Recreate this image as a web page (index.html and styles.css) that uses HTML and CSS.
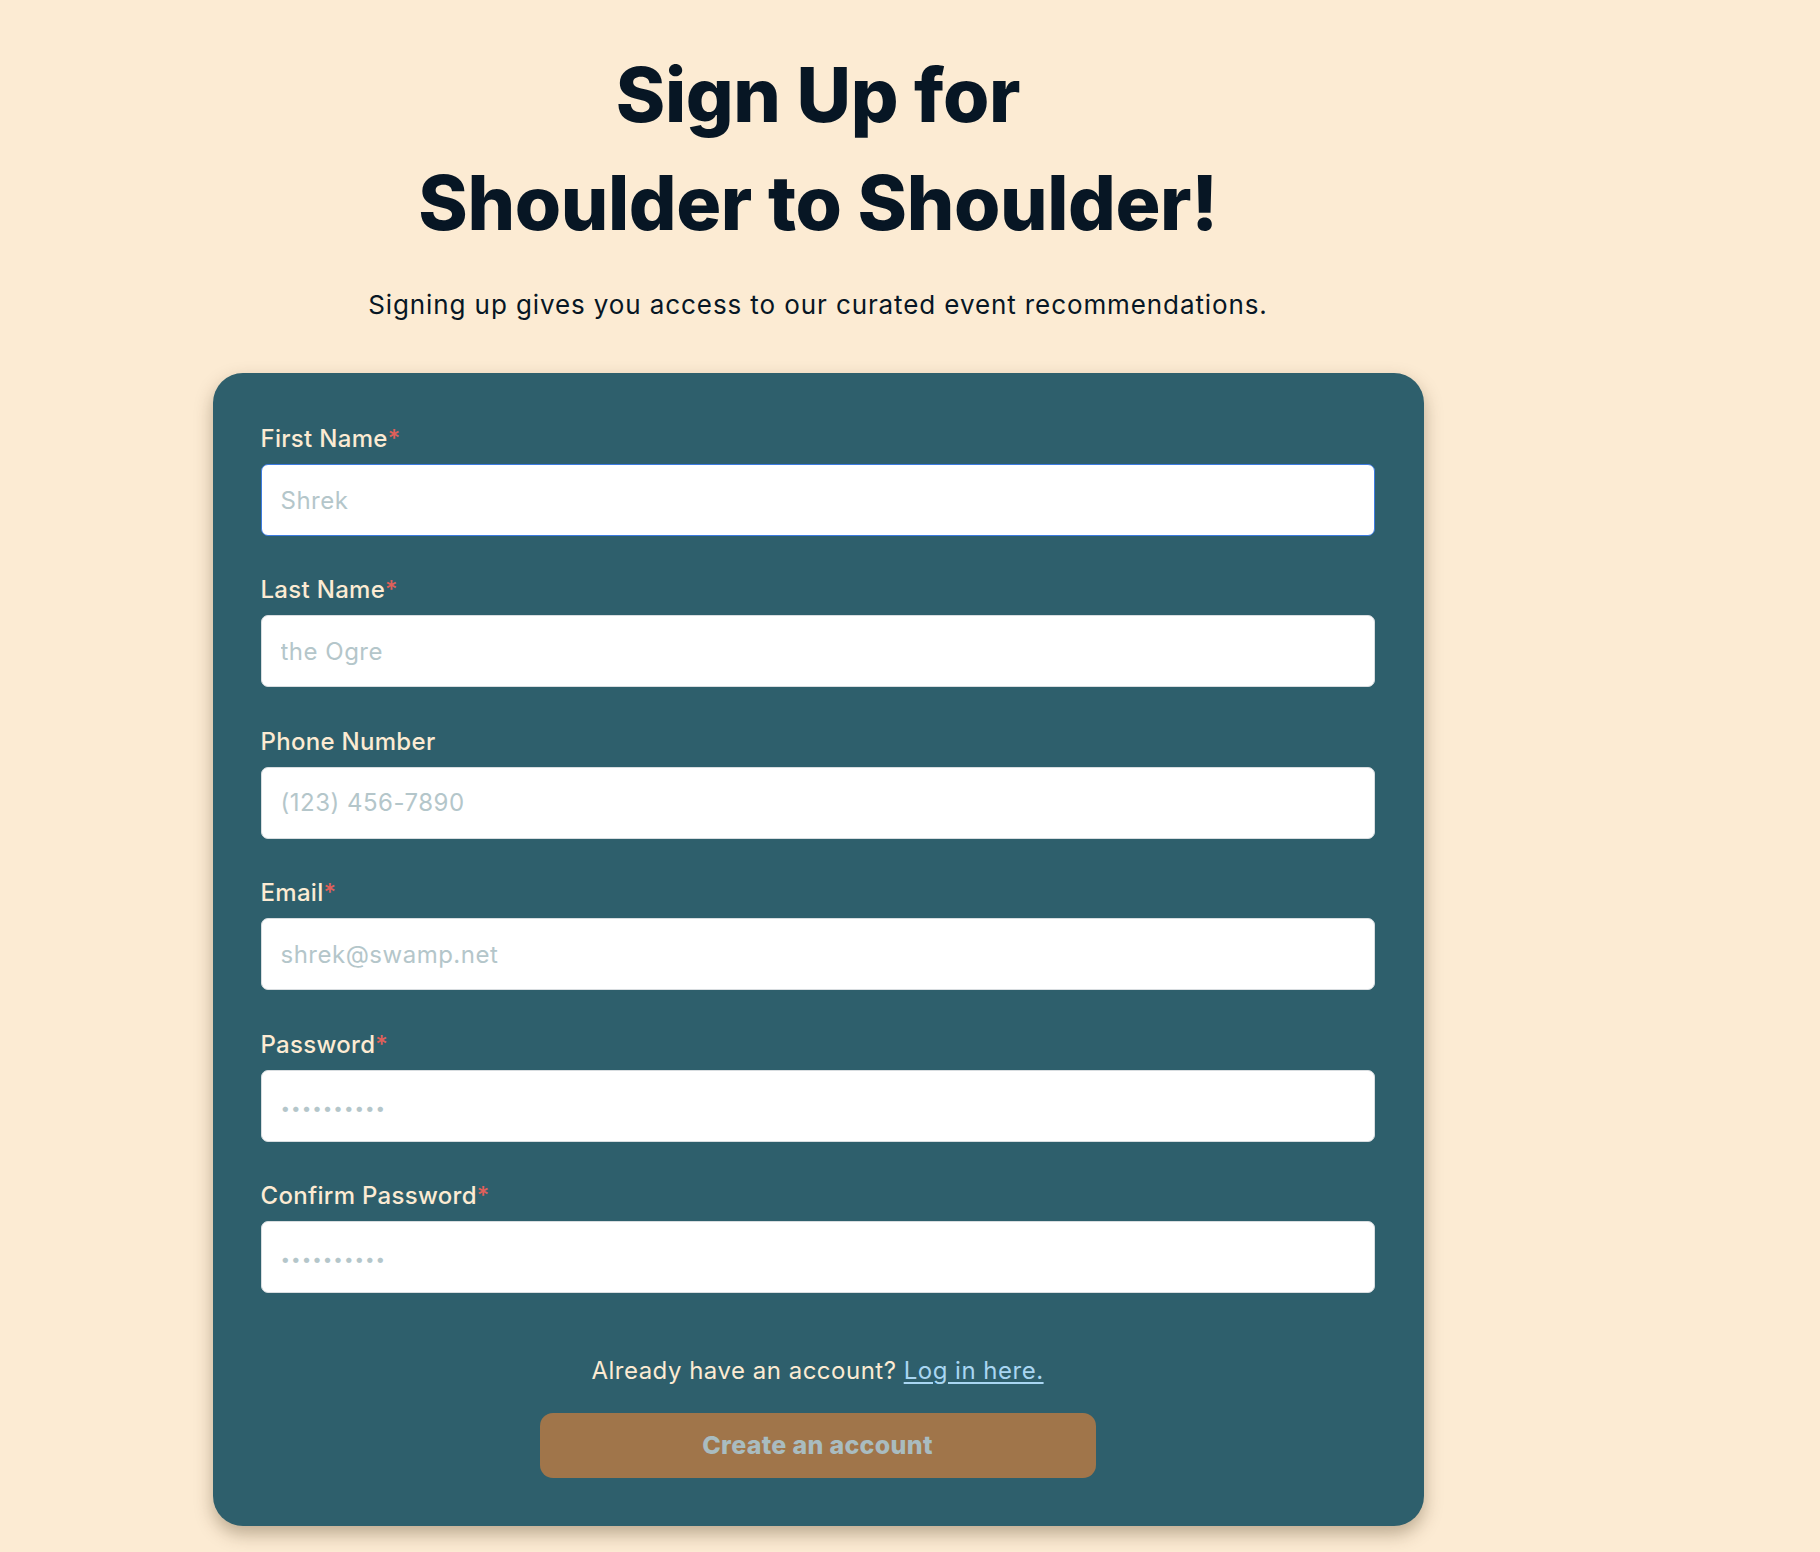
FILE: index.html
```html
<!DOCTYPE html>
<html lang="en">
<head>
<meta charset="utf-8">
<title>Sign Up</title>
<link rel="stylesheet" href="styles.css">
</head>
<body>
<main class="page">
  <h1 class="title">Sign Up for<br>Shoulder to Shoulder!</h1>
  <p class="subtitle">Signing up gives you access to our curated event recommendations.</p>
  <form class="card">
    <div class="field">
      <label class="label">First Name<span class="req">*</span></label>
      <input class="input focused" type="text" placeholder="Shrek">
    </div>
    <div class="field">
      <label class="label">Last Name<span class="req">*</span></label>
      <input class="input" type="text" placeholder="the Ogre">
    </div>
    <div class="field">
      <label class="label">Phone Number</label>
      <input class="input" type="text" placeholder="(123) 456-7890">
    </div>
    <div class="field">
      <label class="label">Email<span class="req">*</span></label>
      <input class="input" type="text" placeholder="shrek@swamp.net">
    </div>
    <div class="field">
      <label class="label">Password<span class="req">*</span></label>
      <input class="input pw" type="password" placeholder="••••••••••">
    </div>
    <div class="field">
      <label class="label">Confirm Password<span class="req">*</span></label>
      <input class="input pw" type="password" placeholder="••••••••••">
    </div>
    <p class="login">Already have an account? <a href="#" class="link">Log in here.</a></p>
    <button type="button" class="submit">Create an account</button>
  </form>
</main>
</body>
</html>
```
FILE: styles.css
```css
html, body {
  margin: 0;
  padding: 0;
  background: #fcebd3;
}
body {
  font-family: "Inter", "Noto Sans", sans-serif;
  color: #071624;
}
.page {
  width: 1636px;
  display: flex;
  flex-direction: column;
  align-items: center;
  padding-top: 41px;
  padding-bottom: 26px;
}
.title {
  margin: 0;
  font-size: 75px;
  line-height: 108px;
  font-weight: 800;
  text-align: center;
  letter-spacing: -0.4px;
  color: #071624;
}
.subtitle {
  margin: 31px 0 0;
  font-size: 26px;
  line-height: 34px;
  letter-spacing: 0.9px;
  color: #071624;
}
.card {
  margin-top: 51px;
  width: 1211px;
  box-sizing: border-box;
  padding: 51px 49px 48px 48px;
  background: #2e5f6c;
  border-radius: 30px;
  box-shadow: 0 8px 18px rgba(70, 50, 20, 0.35);
  display: flex;
  flex-direction: column;
  align-items: center;
}
.field {
  width: 100%;
  display: flex;
  flex-direction: column;
  margin-bottom: 39.4px;
}
.field:nth-of-type(6) {
  margin-bottom: 0;
}
.label {
  font-size: 24px;
  line-height: 30px;
  font-weight: 500;
  letter-spacing: 0.3px;
  color: #fcebd3;
  margin-bottom: 10px;
}
.req {
  color: #e0605a;
}
.input {
  height: 72px;
  box-sizing: border-box;
  width: 100%;
  border: 1px solid #d8dde0;
  border-radius: 7px;
  background: #fff;
  padding: 0 19px;
  font-family: inherit;
  font-size: 24px;
  letter-spacing: 0.5px;
  color: #071624;
  outline: none;
}
.input.focused {
  border-color: #3d7be0;
}
.input::placeholder {
  color: #b4c6ca;
}
.pw::placeholder {
  font-size: 17px;
  letter-spacing: 1px;
}
.login {
  margin: 63px 0 0;
  font-size: 24px;
  line-height: 30px;
  letter-spacing: 0.5px;
  color: #fcebd3;
}
.link {
  color: #a9d6f2;
  text-decoration: underline;
  text-underline-offset: 3px;
}
.submit {
  margin-top: 27px;
  width: 556px;
  height: 65px;
  border: none;
  border-radius: 13px;
  background: #a0754a;
  color: #a9bcc0;
  font-family: inherit;
  font-size: 25px;
  font-weight: 800;
  letter-spacing: 0.3px;
}
```
